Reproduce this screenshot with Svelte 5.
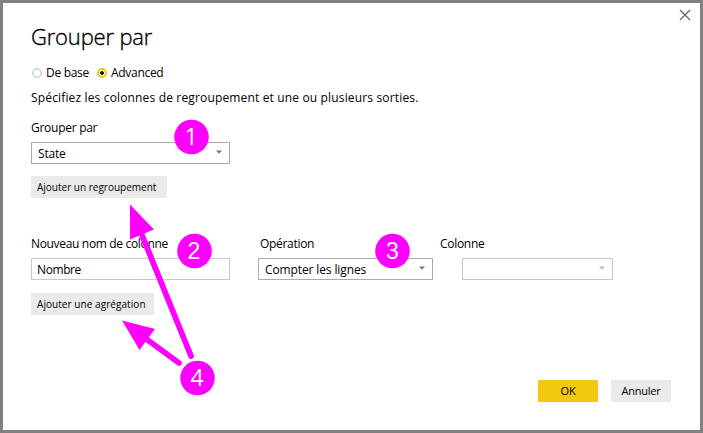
<script>
  let mode = $state('advanced');
</script>

{#snippet caret()}
  <svg class="caret" width="6" height="4" viewBox="0 0 6 4"><path d="M0 0.5h6L3 3.8z" fill="currentColor" /></svg>
{/snippet}

<main class="dialog">
  <svg class="close" width="12" height="12" viewBox="0 0 12 12"><path d="M1 1l10 10M11 1L1 11" stroke="#666" stroke-width="1.3" /></svg>
  <h1>Grouper par</h1>
  <div class="modes">
    <button class="mode basic" class:on={mode === 'basic'} onclick={() => (mode = 'basic')}><i></i><span>De base</span></button>
    <button class="mode" class:on={mode === 'advanced'} onclick={() => (mode = 'advanced')}><i></i><span>Advanced</span></button>
  </div>
  <p class="desc">Spécifiez les colonnes de regroupement et une ou plusieurs sorties.</p>

  <section class="group">
    <div class="label t-group">Grouper par</div>
    <div class="field select w199"><span class="t-state">State</span>{@render caret()}</div>
    <button class="add add-group"><span>Ajouter un regroupement</span></button>
  </section>

  <section class="aggregate">
    <div class="col c1">
      <div class="label t-new">Nouveau nom de colonne</div>
      <div class="field light w199"><span class="t-name">Nombre</span></div>
    </div>
    <div class="col c2">
      <div class="label t-op">Opération</div>
      <div class="field select"><span class="t-count">Compter les lignes</span>{@render caret()}</div>
    </div>
    <div class="col c3">
      <div class="label t-col">Colonne</div>
      <div class="field select light"><span></span>{@render caret()}</div>
    </div>
  </section>
  <button class="add add-agg"><span>Ajouter une agrégation</span></button>

  <footer>
    <button class="ok">OK</button>
    <button class="cancel">Annuler</button>
  </footer>

  <svg class="notes" width="703" height="433" viewBox="0 0 703 433">
    <g stroke="#f0f" stroke-width="5.8" stroke-linecap="round">
      <path d="M191 356L141.5 234" />
      <path d="M179 363L147 339.500" />
    </g>
    <path d="M130 204.500L154 229.500L130 239.500zM122 320.500L155 329L139.500 350z" fill="#f0f" />
    <g fill="#f0f">
      <circle cx="191.500" cy="137" r="17.300" />
      <circle cx="194.500" cy="251" r="17.300" />
      <circle cx="392.500" cy="251" r="17.300" />
      <circle cx="197.500" cy="378" r="17.300" />
    </g>
    <g class="digits">
      <text x="191" y="145">1</text>
      <text x="194" y="259" class="round">2</text>
      <text x="392.500" y="259" class="round">3</text>
      <text x="197" y="386">4</text>
    </g>
  </svg>
</main>

<style>
  :global(body) { margin: 0; }
  .dialog {
    position: relative;
    box-sizing: border-box;
    width: 703px;
    height: 433px;
    border: 3px solid #808080;
    padding: 18px 29px 0 28px;
    background: #fff;
    color: #000;
    font-family: "Open Sans", "Noto Sans", sans-serif;
    font-size: 12px;
    overflow: hidden;
  }
  button { border: 0; padding: 0; margin: 0; color: inherit; font: inherit; letter-spacing: inherit; }
  span { white-space: nowrap; }
  h1 { margin: 0; height: 30px; line-height: 30px; font-size: 22px; font-weight: 300; letter-spacing: -0.18px; white-space: nowrap; -webkit-text-stroke: 0.35px #000; }
  .close { position: absolute; left: 676px; top: 6px; }
  .modes { display: flex; height: 16px; margin-top: 14px; letter-spacing: -0.3px; }
  .mode { display: flex; align-items: center; background: none; line-height: 16px; }
  .basic { width: 65px; }
  .mode i { box-sizing: border-box; width: 10px; height: 10px; margin: 0 4px 0 1px; border: 1.500px solid #ccc; box-shadow: inset 0 0 0 0.5px #ccc; border-radius: 50%; }
  .mode.on i { box-shadow: none; border: 2px solid #f2c811; background: radial-gradient(circle, #222 1.700px, #fff 2.200px); }
  .desc { margin: 8px 0 0; height: 18px; line-height: 18px; white-space: nowrap; letter-spacing: 0.155px; }
  .group { margin-top: 13px; }
  .label { height: 16px; line-height: 16px; white-space: nowrap; letter-spacing: -0.3px; }
  .t-group { letter-spacing: -0.27px; }
  .t-new { letter-spacing: -0.33px; }
  .t-name { letter-spacing: -0.4px; margin-left: -1px; }
  .t-count { letter-spacing: -0.12px; }
  .t-state { letter-spacing: -0.2px; }
  .field { box-sizing: border-box; display: flex; align-items: center; justify-content: space-between; height: 22px; margin-top: 6px; padding: 0 7px 0 6px; border: 1px solid #ababab; }
  .light { border-color: #c8c8c8; }
  .caret { color: #777; margin-top: -2px; }
  .light .caret { color: #bbb; }
  .w199 { width: 199px; }
  .add { display: flex; align-items: center; height: 22px; padding-left: 6px; background: #eaeaea; font-size: 10px; }
  .add span { margin-top: -1px; }
  .add-group { width: 136px; margin-top: 12px; }
  .add-agg { width: 123px; margin-top: 13px; letter-spacing: 0.06px; }
  .aggregate { display: flex; margin-top: 38px; }
  .c1 { width: 227px; }
  .c2 { width: 175px; }
  .c2 .label { padding-left: 2px; }
  .c3 { margin-left: 7px; width: 173px; }
  .c3 .field { margin-left: 22px; }
  footer { display: flex; justify-content: flex-end; gap: 13px; margin-top: 65px; }
  footer button { width: 60px; height: 22px; background: #eaeaea; font-size: 11px; letter-spacing: -0.2px; padding-bottom: 2px; }
  footer .ok { background: #f2c811; }
  .notes { position: absolute; left: -3px; top: -3px; pointer-events: none; }
  .digits { fill: #fff; font-family: "Open Sans", sans-serif; font-size: 23px; text-anchor: middle; }
  .round { font-family: "Liberation Sans", sans-serif; }
</style>
